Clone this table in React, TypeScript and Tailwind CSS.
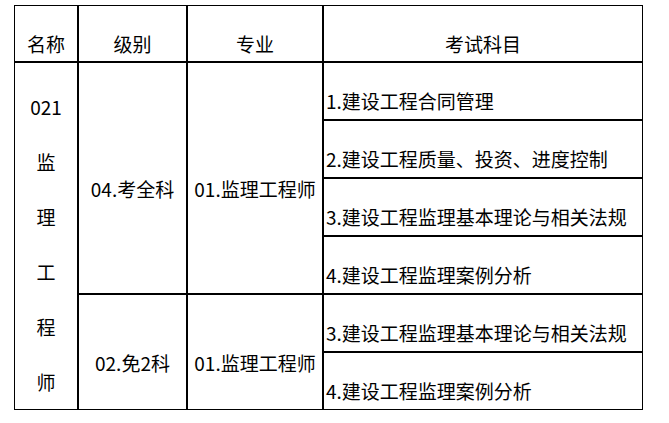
import React from 'react';

// Exam subject table: 名称 / 级别 / 专业 / 考试科目
const groups = [
  {
    level: '04.考全科',
    major: '01.监理工程师',
    subjects: [
      '1.建设工程合同管理',
      '2.建设工程质量、投资、进度控制',
      '3.建设工程监理基本理论与相关法规',
      '4.建设工程监理案例分析',
    ],
  },
  {
    level: '02.免2科',
    major: '01.监理工程师',
    subjects: ['3.建设工程监理基本理论与相关法规', '4.建设工程监理案例分析'],
  },
];

const nameLines = ['021', '监', '理', '工', '程', '师'];

const rowStart = ['row-start-2', 'row-start-6'];
const rowSpan = ['row-span-4', 'row-span-2'];
const subjectRows = [
  ['row-start-2', 'row-start-3', 'row-start-4', 'row-start-5'],
  ['row-start-6', 'row-start-7'],
];

const App: React.FC = () => {
  return (
    <div
      className="w-[669px] h-[423px] bg-white text-black text-[19px] leading-none pl-[14px] pt-[5px]"
      style={{ fontFamily: '"Noto Sans CJK SC", "Noto Sans", sans-serif' }}
    >
      <div className="grid grid-cols-[62px_107px_134px_318px] grid-rows-[55px_repeat(6,56px)] gap-[2px] p-px bg-black w-[629px]">
        {/* Header */}
        <div className="bg-white flex items-center justify-center pt-[20px]">名称</div>
        <div className="bg-white flex items-center justify-center pt-[20px]">级别</div>
        <div className="bg-white flex items-center justify-center pt-[20px]">专业</div>
        <div className="bg-white flex items-center justify-center pt-[20px]">考试科目</div>

        {/* Name column */}
        <div className="bg-white col-start-1 row-start-2 row-span-6 flex flex-col items-center pt-[16px]">
          {nameLines.map(line => (
            <div key={line} className="h-[56px] flex items-center">
              {line}
            </div>
          ))}
        </div>

        {groups.map((group, gi) => (
          <React.Fragment key={gi}>
            <div
              className={`bg-white col-start-2 ${rowStart[gi]} ${rowSpan[gi]} flex items-center justify-center pt-[20px]`}
            >
              {group.level}
            </div>
            <div
              className={`bg-white col-start-3 ${rowStart[gi]} ${rowSpan[gi]} flex items-center justify-center pt-[20px]`}
            >
              {group.major}
            </div>
            {group.subjects.map((subject, si) => (
              <div
                key={subject}
                className={`bg-white col-start-4 ${subjectRows[gi][si]} flex items-center pl-[2px] pt-[19px] whitespace-nowrap`}
              >
                {subject}
              </div>
            ))}
          </React.Fragment>
        ))}
      </div>
    </div>
  );
};

export default App;
